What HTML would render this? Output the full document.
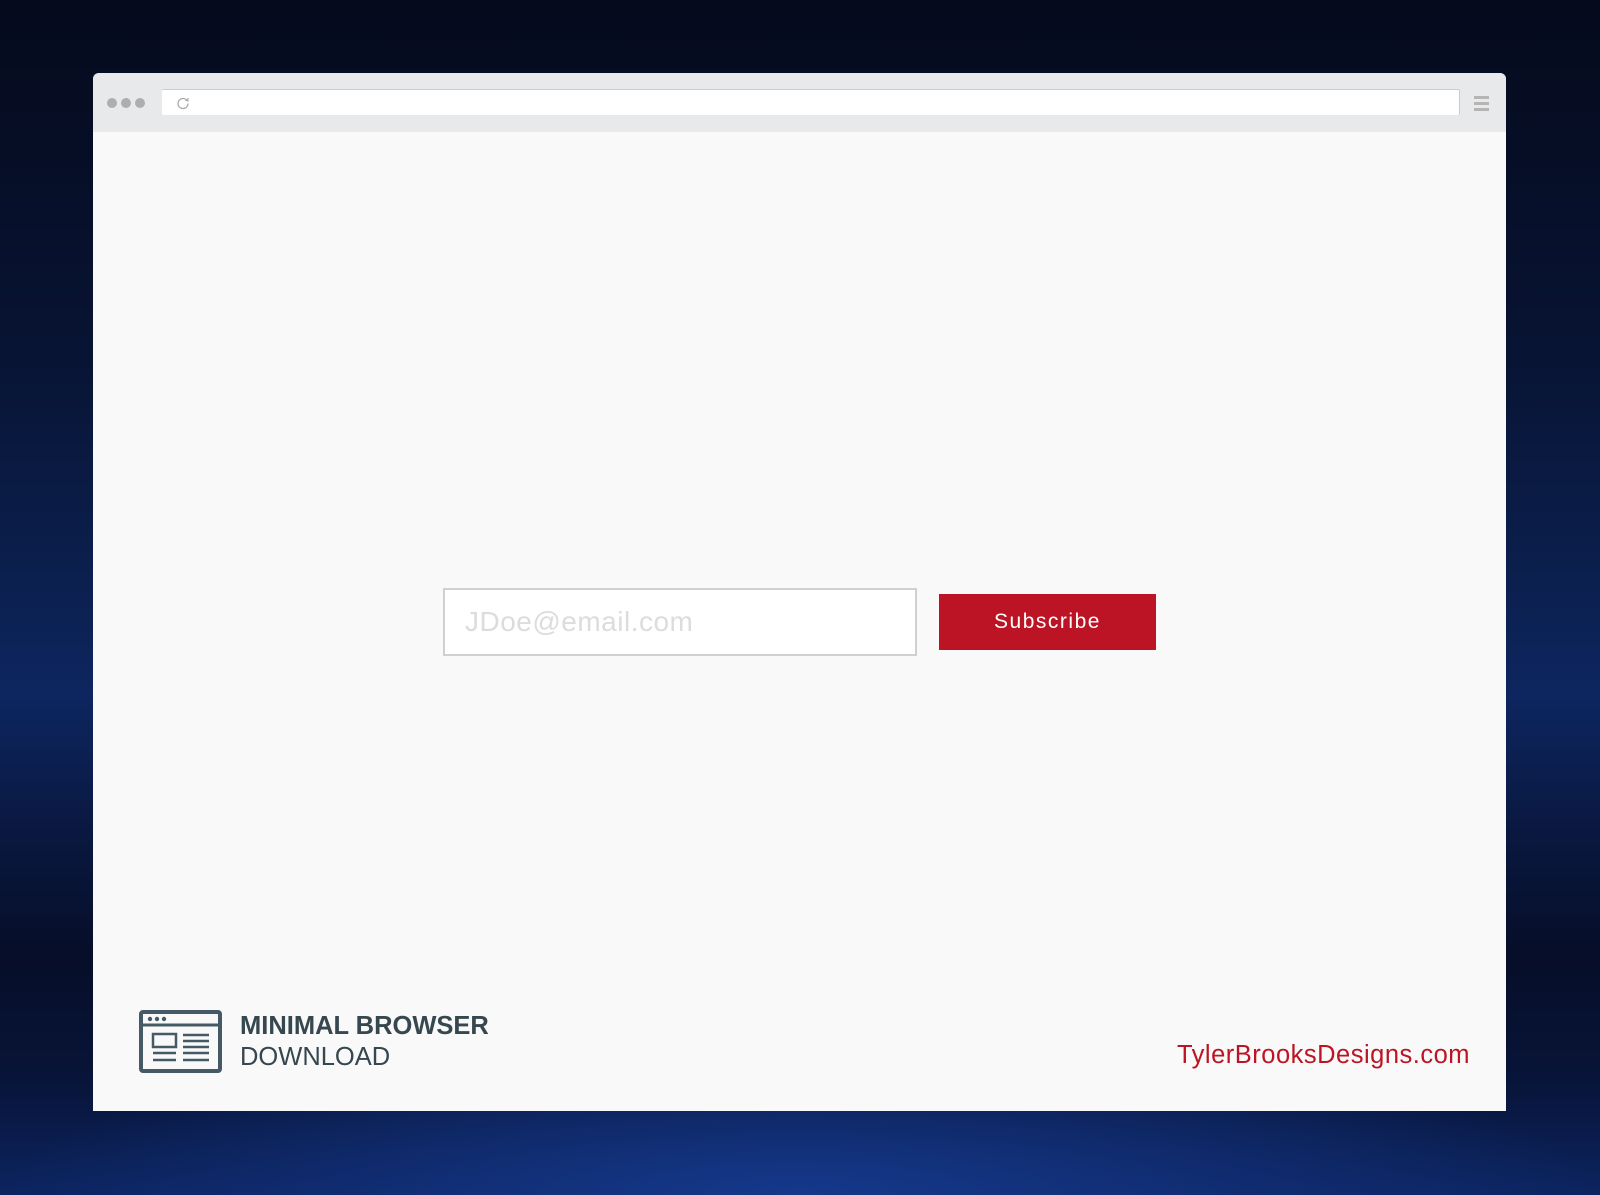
<!DOCTYPE html>
<html><head><meta charset="utf-8"><style>
html,body{margin:0;padding:0}
body{width:1600px;height:1195px;position:relative;overflow:hidden;font-family:"Liberation Sans",sans-serif;
background:radial-gradient(ellipse 800px 160px at 800px 1195px,#15388a 0%,rgba(20,50,120,0) 100%),
linear-gradient(180deg,#050a1c 0%,#081434 30%,#0c2254 52%,#0d2660 58%,#0a1a44 68%,#060e28 80%,#081438 90%,#0c2460 100%);}
.win{position:absolute;left:93px;top:73px;width:1413px;height:1038px;background:#f9f9f9;border-radius:6px 6px 0 0;overflow:hidden}
.bar{position:absolute;left:0;top:0;width:100%;height:59px;background:#e8e9ea}
.dot{position:absolute;top:25px;width:10px;height:10px;border-radius:50%;background:#aeaeae}
.addr{position:absolute;left:69px;top:16px;width:1297px;height:25px;background:#fff;border-top:1px solid #ccc;border-right:1px solid #ccc;border-radius:2px}
.ham{position:absolute;left:1381px;width:15px;height:3px;background:#b5b5b5}
.input{position:absolute;left:350px;top:515px;width:474px;height:68px;background:#fff;border:2px solid #d0d0d0;box-sizing:border-box}
.input span{position:absolute;left:20px;top:16px;font-size:28px;color:#dcdcdc;letter-spacing:0.5px}
.btn{position:absolute;left:846px;top:521px;width:217px;height:56px;background:#bc1424;color:#fff;font-size:21px;letter-spacing:1.5px;text-align:center;line-height:56px}
.t1{position:absolute;left:147px;top:939px;font-size:25.5px;font-weight:bold;color:#37474f}
.t2{position:absolute;left:147px;top:970px;font-size:25.5px;color:#37474f}
.link{position:absolute;left:1084px;top:968px;font-size:25.5px;color:#bc1424;letter-spacing:0.5px}
</style></head><body>
<div class="win">
 <div class="bar">
  <div class="dot" style="left:14px"></div><div class="dot" style="left:28px"></div><div class="dot" style="left:42px"></div>
  <div class="addr"><svg style="position:absolute;left:14px;top:6px" width="14" height="14" viewBox="0 0 14 14"><path d="M11 4.5A5 5 0 1 0 12 7.5" fill="none" stroke="#aaa" stroke-width="1.3"/><path d="M9.5 4.5L12 4.8L11.8 2" fill="none" stroke="#aaa" stroke-width="1.2"/></svg></div>
  <div class="ham" style="top:23px"></div><div class="ham" style="top:29px"></div><div class="ham" style="top:35px"></div>
 </div>
 <div class="input"><span>JDoe@email.com</span></div>
 <div class="btn">Subscribe</div>
 <svg style="position:absolute;left:46px;top:937px" width="83" height="63" viewBox="0 0 83 63">
  <rect x="2" y="2" width="79" height="59" rx="2" fill="none" stroke="#455a64" stroke-width="4"/>
  <line x1="2" y1="15" x2="81" y2="15" stroke="#455a64" stroke-width="3"/>
  <circle cx="11" cy="9" r="2.2" fill="#455a64"/><circle cx="18" cy="9" r="2.2" fill="#455a64"/><circle cx="25" cy="9" r="2.2" fill="#455a64"/>
  <rect x="14" y="24" width="23" height="13" fill="none" stroke="#455a64" stroke-width="2.5"/>
  <g stroke="#455a64" stroke-width="2.5"><line x1="44" y1="25" x2="70" y2="25"/><line x1="44" y1="31" x2="70" y2="31"/><line x1="44" y1="37" x2="70" y2="37"/><line x1="14" y1="43" x2="37" y2="43"/><line x1="44" y1="43" x2="70" y2="43"/><line x1="14" y1="50" x2="37" y2="50"/><line x1="44" y1="50" x2="70" y2="50"/></g>
 </svg>
 <div class="t1">MINIMAL BROWSER</div>
 <div class="t2">DOWNLOAD</div>
 <div class="link">TylerBrooksDesigns.com</div>
</div>
</body></html>
